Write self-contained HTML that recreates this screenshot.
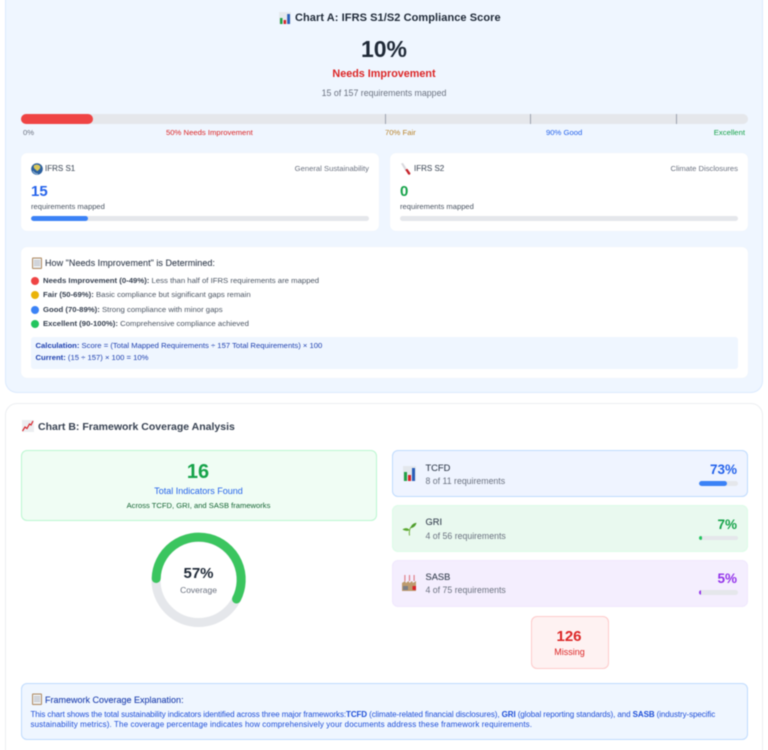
<!DOCTYPE html>
<html lang="en"><head><meta charset="utf-8"><title>IFRS Compliance</title>
<style>
*{box-sizing:border-box;margin:0;padding:0}
html,body{width:768px;height:750px;overflow:hidden;background:#fff}
body{font-family:"Liberation Sans",sans-serif;color:#374151;position:relative;filter:blur(.4px)}
.a{position:absolute}
.t{position:absolute;white-space:nowrap;line-height:12px;height:12px;transform:translateY(-6px);letter-spacing:0}
.c{transform:translate(-50%,-6px)}
.r{transform:translate(-100%,-6px)}
.panel{border-radius:12px}
.card{background:#fff;border-radius:6px;box-shadow:0 0 1px rgba(0,0,0,.05)}
.bar{position:absolute;background:#e5e7eb;border-radius:3px;overflow:hidden}
.bar i{display:block;height:100%;border-radius:3px}
.dot{position:absolute;width:8px;height:8px;border-radius:50%;left:31px}
.fw{position:absolute;left:392px;width:356px;height:47px;border-radius:6px}
svg{position:absolute}
b{font-weight:700}
.m{-webkit-text-stroke:.1px currentColor}
</style></head><body>

<div class="a panel" style="left:5px;top:-20px;width:758px;height:413px;background:#eff6ff;border:1px solid #dbeafe"></div>
<div class="a panel" style="left:5px;top:403px;width:758px;height:380px;background:#fff;border:1px solid #eceef1"></div>

<svg style="left:279px;top:12px" width="12" height="12" viewBox="0 0 12 12"><rect width="12" height="12" fill="#e5e9ee"/><rect x="1" y="6" width="2.5" height="6" fill="#22a045"/><rect x="4.6" y="8" width="2.5" height="4" fill="#d8232a"/><rect x="8.2" y="2" width="2.8" height="10" fill="#2a5db8"/></svg>
<div class="t" style="left:295px;top:18px;font-size:11px;font-weight:700;color:#1f2937;letter-spacing:.07px">Chart A: IFRS S1/S2 Compliance Score</div>
<div class="t c" style="left:384px;top:49px;font-size:23px;font-weight:700;color:#1f2937;line-height:24px;height:24px;margin-top:-6px">10%</div>
<div class="t c" style="left:384px;top:73.5px;font-size:10.8px;font-weight:700;color:#dc2626">Needs Improvement</div>
<div class="t c" style="left:384px;top:93px;font-size:8.8px;color:#6b7280">15 of 157 requirements mapped</div>

<div class="a" style="left:21px;top:114px;width:727px;height:9.5px;background:#e5e7eb;border-radius:5px"></div>
<div class="a" style="left:21px;top:114px;width:72px;height:9.5px;background:#ef4444;border-radius:5px"></div>
<div class="a" style="left:384.5px;top:114px;width:1.2px;height:9.5px;background:#9ca3af"></div>
<div class="a" style="left:530px;top:114px;width:1.2px;height:9.5px;background:#9ca3af"></div>
<div class="a" style="left:675.5px;top:114px;width:1.2px;height:9.5px;background:#9ca3af"></div>
<div class="t" style="left:23px;top:133px;font-size:7.7px;color:#6b7280">0%</div>
<div class="t" style="left:166px;top:133px;font-size:7.7px;color:#dc2626">50% Needs Improvement</div>
<div class="t" style="left:385px;top:133px;font-size:7.7px;color:#b9832a">70% Fair</div>
<div class="t" style="left:546px;top:133px;font-size:7.7px;color:#2563eb">90% Good</div>
<div class="t r" style="left:745px;top:133px;font-size:7.7px;color:#16a34a">Excellent</div>

<div class="a card" style="left:21px;top:153px;width:358px;height:78px"></div>
<div class="a card" style="left:390px;top:153px;width:358px;height:78px"></div>

<svg style="left:31px;top:163px" width="12" height="12" viewBox="0 0 12 12"><circle cx="6" cy="6" r="5.8" fill="#2b5f9e"/><path d="M3 2.5C5 1 8 1.5 9 3c.8 1.2 0 3-1.3 3.8C7 8 6 8.5 5.5 7.5 5 6.5 3.5 6 3 5 2.7 4 2.5 3.2 3 2.5z" fill="#d9c75a"/><path d="M2 8c1 2 3 3 5 2.800" stroke="#8fb5d8" fill="none"/></svg>
<div class="t m" style="left:45px;top:169px;font-size:8px;color:#4b5563">IFRS S1</div>
<div class="t r" style="left:369px;top:169px;font-size:7.65px;color:#6b7280">General Sustainability</div>
<div class="t" style="left:31px;top:190px;font-size:15px;font-weight:700;color:#2563eb;line-height:16px;height:16px">15</div>
<div class="t" style="left:31px;top:206.5px;font-size:7.6px;color:#4b5563">requirements mapped</div>
<div class="bar" style="left:31px;top:216px;width:338px;height:5px"><i style="width:57px;background:#3b82f6"></i></div>

<svg style="left:400px;top:163px" width="12" height="12" viewBox="0 0 12 12"><path d="M1 .5L3 0l4.5 7-2 1.200z" fill="#d9d9de"/><path d="M5.3 6.8l2-1.100 3 4.3a1.300 1.300 0 0 1-2.200 1.300z" fill="#c6252b"/></svg>
<div class="t m" style="left:414px;top:169px;font-size:8px;color:#4b5563">IFRS S2</div>
<div class="t r" style="left:738px;top:169px;font-size:7.65px;color:#6b7280">Climate Disclosures</div>
<div class="t" style="left:400px;top:190px;font-size:15px;font-weight:700;color:#16a34a;line-height:16px;height:16px">0</div>
<div class="t" style="left:400px;top:206.5px;font-size:7.6px;color:#4b5563">requirements mapped</div>
<div class="bar" style="left:400px;top:216px;width:338px;height:5px"></div>

<div class="a card" style="left:21px;top:247px;width:727px;height:131px"></div>
<svg style="left:31px;top:257px" width="12" height="12" viewBox="0 0 12 12"><rect x="1" y="0.5" width="10" height="11.5" rx="1" fill="#b08a60"/><rect x="2" y="1.5" width="8" height="9.5" fill="#e8ebee"/><path d="M3 4h6M3 6h6M3 8h6" stroke="#aab0b8" stroke-width=".7"/></svg>
<div class="t m" style="left:45px;top:262.5px;font-size:9px;color:#374151;letter-spacing:.04px">How "Needs Improvement" is Determined:</div>

<div class="dot" style="top:276.5px;background:#ef4444"></div>
<div class="t" style="left:43px;top:280.5px;font-size:7.75px;color:#4b5563"><b style="color:#374151">Needs Improvement (0-49%):</b> Less than half of IFRS requirements are mapped</div>
<div class="dot" style="top:291px;background:#eab308"></div>
<div class="t" style="left:43px;top:295px;font-size:7.75px;color:#4b5563"><b style="color:#374151">Fair (50-69%):</b> Basic compliance but significant gaps remain</div>
<div class="dot" style="top:305.5px;background:#3b82f6"></div>
<div class="t" style="left:43px;top:309.5px;font-size:7.75px;color:#4b5563"><b style="color:#374151">Good (70-89%):</b> Strong compliance with minor gaps</div>
<div class="dot" style="top:320px;background:#22c55e"></div>
<div class="t" style="left:43px;top:324px;font-size:7.75px;color:#4b5563"><b style="color:#374151">Excellent (90-100%):</b> Comprehensive compliance achieved</div>

<div class="a" style="left:31px;top:336.5px;width:707px;height:32px;background:#eff6ff;border-radius:3px"></div>
<div class="t" style="left:35.5px;top:346px;font-size:7.68px;color:#1e40af"><b>Calculation:</b> Score = (Total Mapped Requirements ÷ 157 Total Requirements) × 100</div>
<div class="t" style="left:35.5px;top:358px;font-size:7.68px;color:#1e40af"><b>Current:</b> (15 ÷ 157) × 100 = 10%</div>

<svg style="left:22px;top:420px" width="12" height="12" viewBox="0 0 12 12"><rect width="12" height="12" fill="#eceef1"/><path d="M.5 11L3 7l2 1.500L7.500 4 9 5l2-4" stroke="#d8232a" stroke-width="1.2" fill="none"/></svg>
<div class="t" style="left:38px;top:426.5px;font-size:10.5px;font-weight:700;color:#374151">Chart B: Framework Coverage Analysis</div>

<div class="a" style="left:21px;top:450px;width:356px;height:71px;background:#f0fdf4;border:1px solid #bbf7d0;border-radius:6px"></div>
<div class="t c" style="left:198px;top:471.5px;font-size:20px;font-weight:700;color:#16a34a;line-height:20px;height:20px;margin-top:-4px">16</div>
<div class="t c" style="left:198.5px;top:490.5px;font-size:9px;color:#2563eb">Total Indicators Found</div>
<div class="t c" style="left:198.5px;top:506px;font-size:7.6px;color:#166534">Across TCFD, GRI, and SASB frameworks</div>

<svg style="left:148px;top:529px" width="102" height="102" viewBox="0 0 102 102">
<circle cx="50.5" cy="51" r="42.5" fill="none" stroke="#e5e7eb" stroke-width="9"/>
<path d="M8.2 49.5A42.5 42.5 0 1 1 88.5 70" fill="none" stroke="#3bc55f" stroke-width="9" stroke-linecap="round"/>
</svg>
<div class="t c" style="left:198.5px;top:574px;font-size:15px;font-weight:700;color:#1f2937">57%</div>
<div class="t c" style="left:198.5px;top:590px;font-size:8.5px;color:#6b7280">Coverage</div>

<div class="fw" style="top:450px;background:#eff4ff;border:1px solid #bfdbfe"></div>
<div class="fw" style="top:504.5px;background:#e9f9ef;border:1px solid #dcfce7"></div>
<div class="fw" style="top:559.5px;background:#f4eefe;border:1px solid #f0e8fd"></div>

<svg style="left:403px;top:466px" width="13" height="15" viewBox="0 0 13 15"><rect width="13" height="15" fill="#e3e7ec"/><rect x="1" y="6" width="3" height="9" fill="#22a045"/><rect x="5" y="9" width="3" height="6" fill="#d8232a"/><rect x="9" y="2" width="3" height="13" fill="#2a5db8"/></svg>
<div class="t m" style="left:425.5px;top:467.5px;font-size:9.3px;color:#374151">TCFD</div>
<div class="t" style="left:425.5px;top:481px;font-size:8.75px;color:#6b7280">8 of 11 requirements</div>
<div class="t r" style="left:737px;top:470px;font-size:13.5px;font-weight:700;color:#2563eb">73%</div>
<div class="bar" style="left:699px;top:481px;width:38.5px;height:4.5px"><i style="width:28px;background:#3b82f6"></i></div>

<svg style="left:402px;top:521px" width="15" height="15" viewBox="0 0 15 15"><path d="M7.5 14.5C7 11 7.500 8 9 6" stroke="#6fae3a" stroke-width="1" fill="none"/><path d="M8.500 7c.5-3 3-5 6-5.300-.5 3-3 5.300-6 5.300z" fill="#4f9e2c"/><path d="M7.500 9C6 6.800 3 6.500.5 8.500 3 10 6 10.500 7.500 9z" fill="#5aa830"/></svg>
<div class="t m" style="left:425.5px;top:522px;font-size:9.3px;color:#374151">GRI</div>
<div class="t" style="left:425.5px;top:535.5px;font-size:8.75px;color:#6b7280">4 of 56 requirements</div>
<div class="t r" style="left:737px;top:524.5px;font-size:13.5px;font-weight:700;color:#16a34a">7%</div>
<div class="bar" style="left:699px;top:535.5px;width:38.5px;height:4.5px"><i style="width:2.7px;background:#22c55e"></i></div>

<svg style="left:402px;top:575px" width="15" height="16" viewBox="0 0 15 16"><path d="M0 16V8l3-2 1 2 2.500-2 1 2 2.500-2 1 2 3-2v10z" fill="#bd9a6d"/><rect x="2.3" y="0" width="1.2" height="6" fill="#e0808a"/><rect x="6.9" y="0" width="1.2" height="6" fill="#e0808a"/><rect x="11.5" y="0" width="1.2" height="6" fill="#e0808a"/><rect x="1" y="11" width="5" height="4" fill="#7c7f86"/><rect x="10.5" y="11" width="3.5" height="4" fill="#d8232a"/></svg>
<div class="t m" style="left:425.5px;top:577px;font-size:9.3px;color:#374151">SASB</div>
<div class="t" style="left:425.5px;top:590px;font-size:8.75px;color:#6b7280">4 of 75 requirements</div>
<div class="t r" style="left:737px;top:579px;font-size:13.5px;font-weight:700;color:#9333ea">5%</div>
<div class="bar" style="left:699px;top:590px;width:38.5px;height:4.5px"><i style="width:2px;background:#9333ea"></i></div>

<div class="a" style="left:530.5px;top:616px;width:78px;height:52.5px;background:#fef2f2;border:1px solid #fecaca;border-radius:6px"></div>
<div class="t c" style="left:569px;top:636.5px;font-size:15px;font-weight:700;color:#dc2626">126</div>
<div class="t c" style="left:569.5px;top:652px;font-size:9px;color:#dc2626">Missing</div>

<div class="a" style="left:21px;top:683px;width:727px;height:56.5px;background:#eff6ff;border:1px solid #bfdbfe;border-radius:6px"></div>
<svg style="left:31px;top:693px" width="12" height="12" viewBox="0 0 12 12"><rect x="1" y="0.5" width="10" height="11.5" rx="1" fill="#b08a60"/><rect x="2" y="1.5" width="8" height="9.5" fill="#e8ebee"/><path d="M3 4h6M3 6h6M3 8h6" stroke="#aab0b8" stroke-width=".7"/></svg>
<div class="t m" style="left:45px;top:699.5px;font-size:9px;color:#1e40af">Framework Coverage Explanation:</div>
<div class="t" style="left:30.5px;top:715px;font-size:8px;color:#1d4ed8;letter-spacing:-.087px">This chart shows the total sustainability indicators identified across three major frameworks:<b>TCFD</b> (climate-related financial disclosures), <b>GRI</b> (global reporting standards), and <b>SASB</b> (industry-specific</div>
<div class="t" style="left:30.5px;top:725px;font-size:8px;color:#1d4ed8;letter-spacing:.11px">sustainability metrics). The coverage percentage indicates how comprehensively your documents address these framework requirements.</div>
</body></html>
